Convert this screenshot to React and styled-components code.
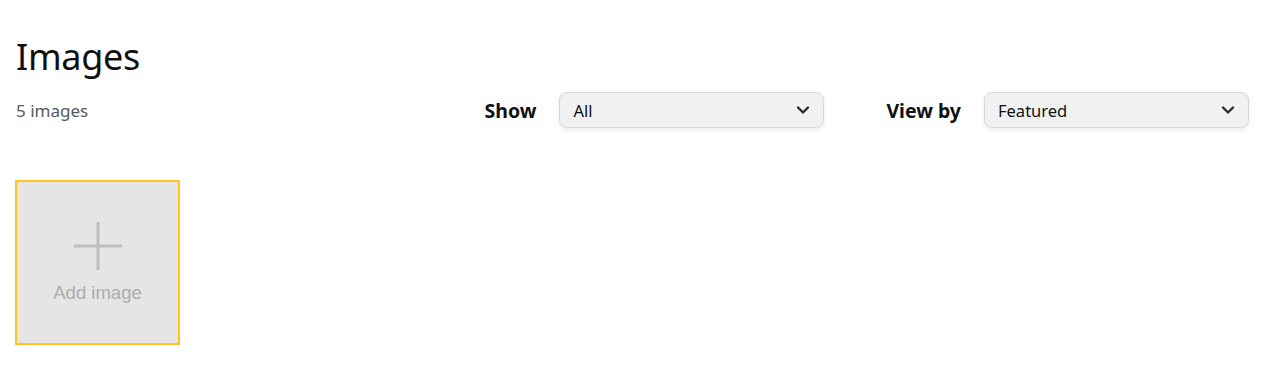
import React from "react"
import styled, { createGlobalStyle } from "styled-components"

const GlobalStyle = createGlobalStyle`
  body {
    margin: 0;
    background: #fff;
    font-family: "Noto Sans", "Liberation Sans", Arial, sans-serif;
    color: #0f1111;
  }
`

const Page = styled.div`
  padding: 33px 13px 0 16px;
`

const Title = styled.h1`
  margin: 0;
  font-size: 36px;
  font-weight: 400;
  line-height: 48px;
  letter-spacing: -0.3px;
`

const Toolbar = styled.div`
  display: flex;
  align-items: center;
  justify-content: space-between;
  margin-top: 11px;
`

const Count = styled.span`
  font-size: 17px;
  color: #565959;
`

const Controls = styled.div`
  display: flex;
  align-items: center;
`

const Label = styled.span`
  font-size: 19.5px;
  font-weight: 700;
  margin-left: ${p => p.$first ? "0" : "62px"};
  margin-right: 23px;
`

const Select = styled.div`
  width: 265px;
  height: 36px;
  box-sizing: border-box;
  display: flex;
  align-items: center;
  justify-content: space-between;
  padding: 0 12px 0 13px;
  background: #f0f2f2;
  border: 1px solid #d5d9d9;
  border-radius: 8px;
  box-shadow: 0 2px 5px rgba(15, 17, 17, 0.08);
  font-size: 16.5px;
`

const Grid = styled.div`
  display: flex;
  margin-top: 52px;
  margin-left: -1px;
`

const AddCard = styled.div`
  width: 165px;
  height: 165px;
  box-sizing: border-box;
  border: 2px solid #ffc41f;
  background: #e5e5e6;
  display: flex;
  flex-direction: column;
  align-items: center;
  padding-top: 40px;
`

const AddText = styled.span`
  margin-top: 12px;
  font-family: "Liberation Sans", Arial, sans-serif;
  font-size: 18.5px;
  color: #acacac;
`

const Chevron = () => (
  <svg width="16" height="16" viewBox="0 0 16 16">
    <path d="M3 5.5 L8 10.5 L13 5.5" fill="none" stroke="#2a2c2c" strokeWidth="2.4" strokeLinecap="round" strokeLinejoin="round" />
  </svg>
)

const Plus = () => (
  <svg width="48" height="48" viewBox="0 0 48 48">
    <path d="M24 0 V48 M0 24 H48" stroke="#bdbdbd" strokeWidth="3" />
  </svg>
)

export default function App() {
  return (
    <Page>
      <GlobalStyle />
      <Title>Images</Title>
      <Toolbar>
        <Count>5 images</Count>
        <Controls>
          <Label $first>Show</Label>
          <Select>All<Chevron /></Select>
          <Label>View by</Label>
          <Select>Featured<Chevron /></Select>
        </Controls>
      </Toolbar>
      <Grid>
        <AddCard>
          <Plus />
          <AddText>Add image</AddText>
        </AddCard>
      </Grid>
    </Page>
  )
}
